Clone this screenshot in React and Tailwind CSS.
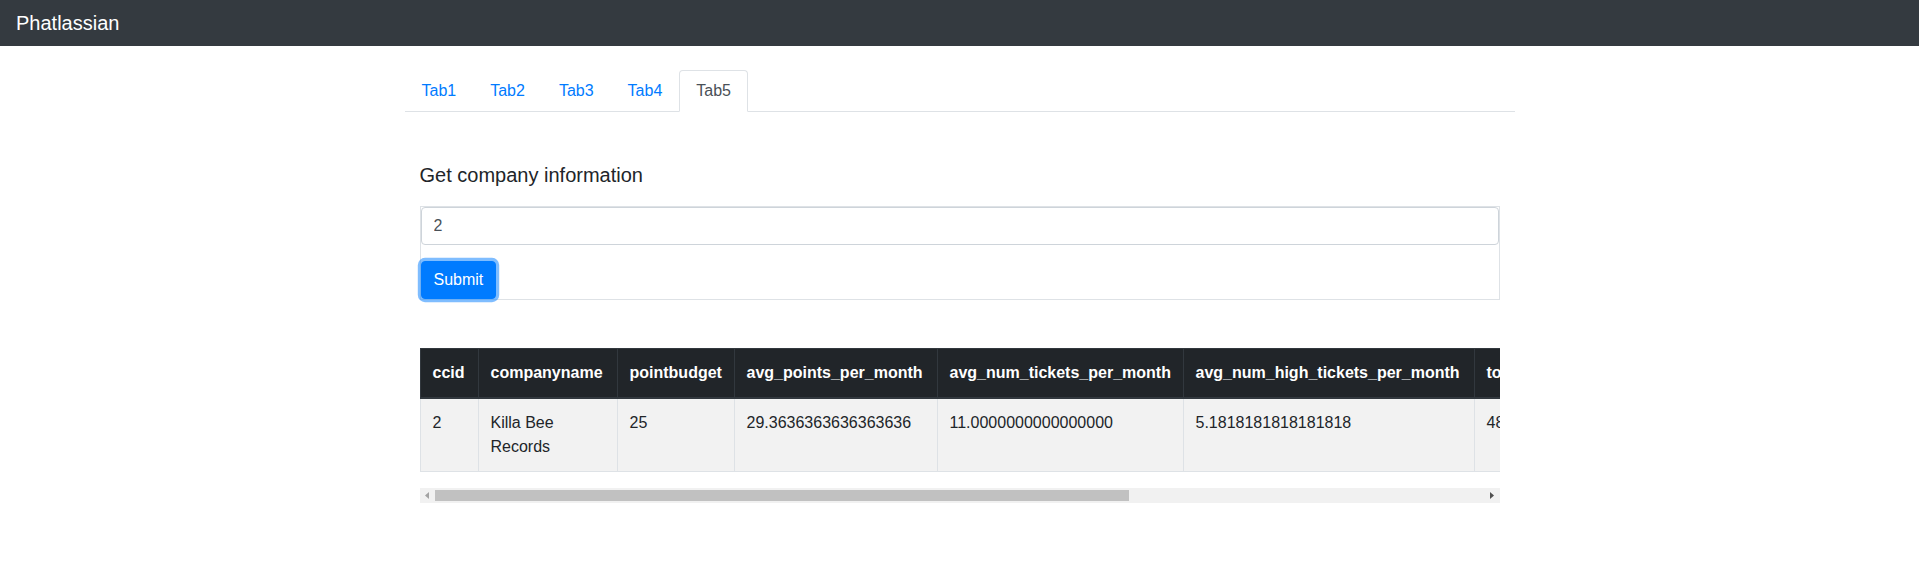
import React from "react";

const columns = [
  { name: "ccid", w: "w-[58px]" },
  { name: "companyname", w: "w-[139px]" },
  { name: "pointbudget", w: "w-[117px]" },
  { name: "avg_points_per_month", w: "w-[203px]" },
  { name: "avg_num_tickets_per_month", w: "w-[246px]" },
  { name: "avg_num_high_tickets_per_month", w: "w-[291px]" },
  { name: "total_num_tickets", w: "w-[170px]" },
  { name: "total_num_high_tickets", w: "w-[210px]" },
  { name: "total_points_spent", w: "w-[200px]" },
];

const row = [
  "2",
  "Killa Bee Records",
  "25",
  "29.3636363636363636",
  "11.0000000000000000",
  "5.1818181818181818",
  "484",
  "228",
  "1292",
];

const tabs = ["Tab1", "Tab2", "Tab3", "Tab4", "Tab5"];

export default function App() {
  return (
    <div className="min-h-[561px] bg-white font-['Liberation_Sans',Arial,sans-serif] text-base text-[#212529]">
      <nav className="flex h-[46px] items-center bg-[#343a40] px-4">
        <span className="text-xl leading-[30px] text-white">Phatlassian</span>
      </nav>

      <div className="mx-auto mt-6 w-[1140px] px-[15px]">
        <ul className="flex border-b border-[#dee2e6]">
          {tabs.map((t) => (
            <li key={t} className="-mb-px">
              {t === "Tab5" ? (
                <span className="block rounded-t border border-[#dee2e6] border-b-white bg-white px-4 py-2 leading-6 text-[#495057]">
                  {t}
                </span>
              ) : (
                <span className="block border border-transparent px-4 py-2 leading-6 text-[#007bff]">
                  {t}
                </span>
              )}
            </li>
          ))}
        </ul>

        <div className="px-[15px] pt-[51px]">
          <h5 className="mb-[19px] text-xl leading-6 font-normal">Get company information</h5>

          <div className="border border-[#dee2e6]">
            <input
              readOnly
              value="2"
              className="block h-[38px] w-full rounded border border-[#ced4da] px-3 text-base leading-6 text-[#495057] outline-none"
            />
            <button className="mt-4 block h-[38px] rounded border border-[#007bff] bg-[#007bff] px-3 text-base leading-6 text-white shadow-[0_0_0_3.2px_rgba(0,123,255,0.5)]">
              Submit
            </button>
          </div>

          <div className="mt-12 w-full">
            <div className="overflow-hidden">
              <table className="mb-4 w-[1634px] table-fixed border-collapse text-left">
                <colgroup>
                  {columns.map((c) => (
                    <col key={c.name} className={c.w} />
                  ))}
                </colgroup>
                <thead>
                  <tr>
                    {columns.map((c) => (
                      <th
                        key={c.name}
                        className="whitespace-nowrap border border-b-2 border-[#32383e] bg-[#212529] p-3 align-bottom font-bold leading-6 text-white"
                      >
                        {c.name}
                      </th>
                    ))}
                  </tr>
                </thead>
                <tbody>
                  <tr className="bg-[#f2f2f2]">
                    {row.map((v, i) => (
                      <td key={i} className="border border-[#dee2e6] p-3 align-top leading-6">
                        {v}
                      </td>
                    ))}
                  </tr>
                </tbody>
              </table>
            </div>
            {/* horizontal scrollbar */}
            <div className="flex h-[15px] items-center bg-[#f1f1f1]">
              <div className="flex h-[15px] w-[15px] items-center justify-center">
                <svg width="4" height="7" viewBox="0 0 4 7">
                  <path d="M4 0 L0 3.5 L4 7 Z" fill="#a3a3a3" />
                </svg>
              </div>
              <div className="flex-1 self-stretch py-[2px]">
                <div className="h-full w-[694px] bg-[#c1c1c1]" />
              </div>
              <div className="flex h-[15px] w-[15px] items-center justify-center">
                <svg width="4" height="7" viewBox="0 0 4 7">
                  <path d="M0 0 L4 3.5 L0 7 Z" fill="#505050" />
                </svg>
              </div>
            </div>
          </div>
        </div>
      </div>
    </div>
  );
}
